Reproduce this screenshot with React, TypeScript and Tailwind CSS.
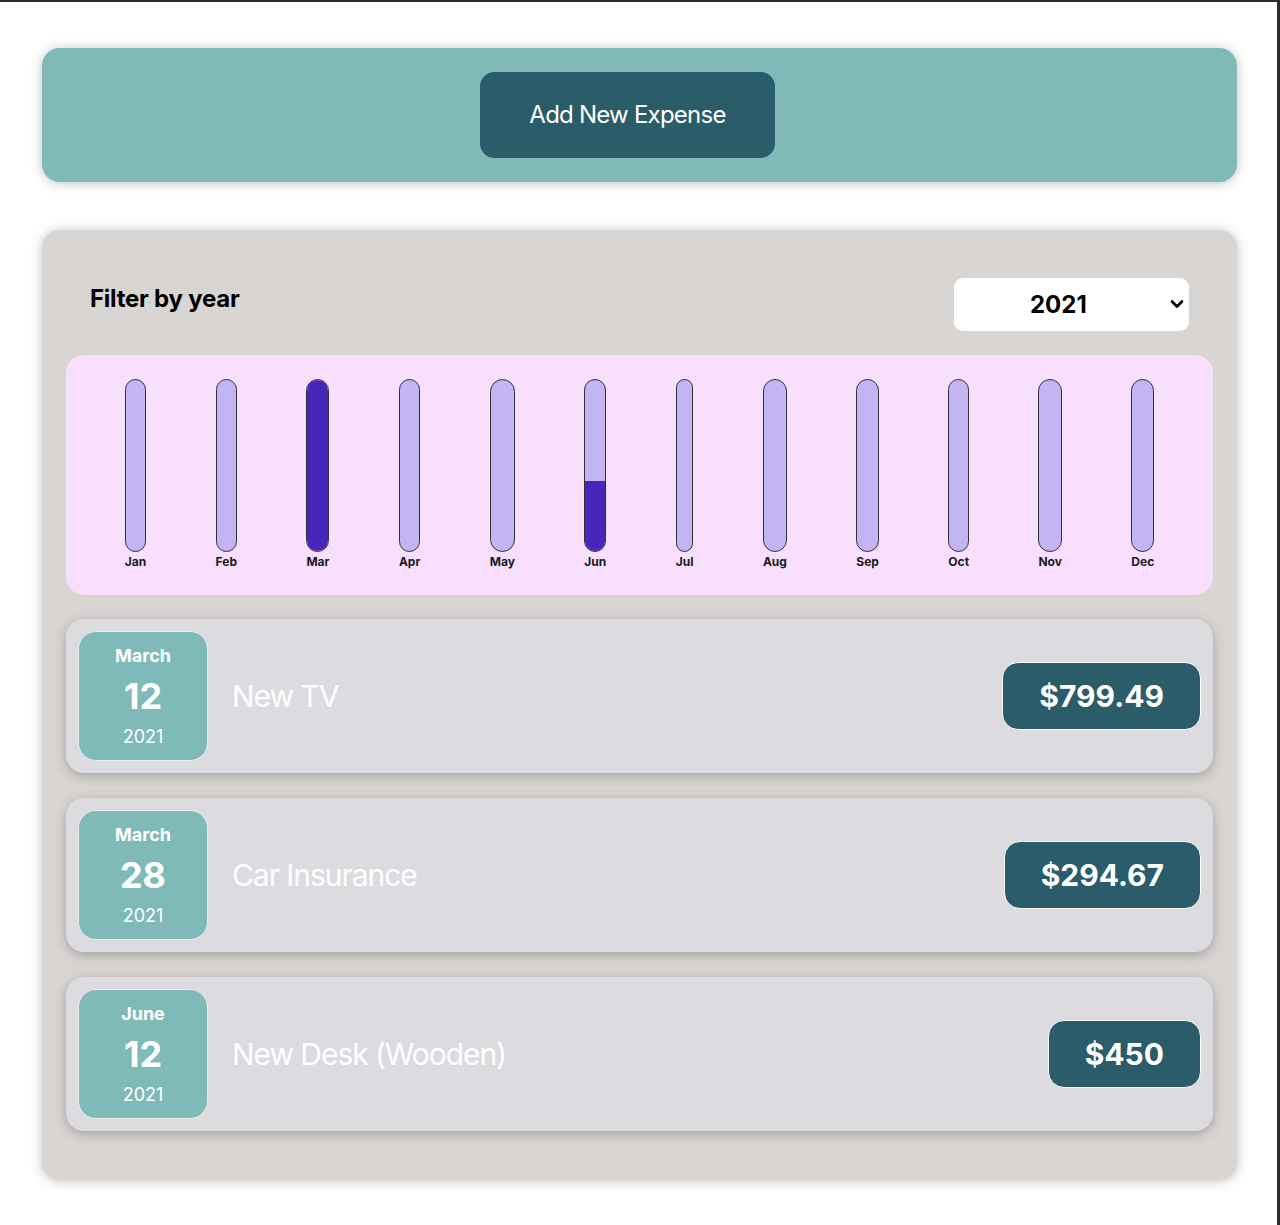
import React from "react";

const months = ["Jan","Feb","Mar","Apr","May","Jun","Jul","Aug","Sep","Oct","Nov","Dec"];
const fills: Record<string, number> = { Mar: 100, Jun: 41.1 };

const expenses = [
  { month: "March", day: "12", year: "2021", title: "New TV", price: "$799.49" },
  { month: "March", day: "28", year: "2021", title: "Car Insurance", price: "$294.67" },
  { month: "June", day: "12", year: "2021", title: "New Desk (Wooden)", price: "$450" },
];

export default function App() {
  return (
    <div className="min-h-[1225px] bg-white border-t-2 border-r-[3px] border-[#2c2c2c] font-['Inter',sans-serif] text-black">
      <div className="w-[1195px] ml-[42px] pt-[46px] pb-[45px]">
        <div className="bg-[#7fbab8] rounded-[18px] p-6 text-center shadow-[0_1px_12px_rgba(0,0,0,0.25)]">
          <button className="bg-[#2a5c69] border border-[#2a5c69] text-white rounded-[14px] px-12 py-6 text-[24px] leading-[36px] tracking-[-0.032em] mr-6">
            Add New Expense
          </button>
        </div>

        <div className="mt-12 bg-[#d9d5d2] rounded-[18px] px-6 pt-6 pb-[49px] shadow-[0_1px_12px_rgba(0,0,0,0.25)]">
          <div className="px-6">
            <div className="flex items-center justify-between my-6">
              <label className="font-bold text-[24px] leading-[36px] mb-3 tracking-[-0.01em]">Filter by year</label>
              <div className="relative">
                <select defaultValue="2021" className="appearance-none bg-white rounded-[9px] w-[235px] h-[53px] pl-[76px] text-[24px] font-bold leading-[29px] outline-none">
                  <option>2022</option>
                  <option>2021</option>
                  <option>2020</option>
                  <option>2019</option>
                </select>
                <svg className="absolute right-[4px] top-[19px] pointer-events-none" width="16" height="14" viewBox="0 0 16 14">
                  <path d="M3 4.5 L8 9.5 L13 4.5" fill="none" stroke="#000" strokeWidth="2.6" strokeLinecap="round" strokeLinejoin="round" />
                </svg>
              </div>
            </div>
          </div>

          <div className="bg-[#f7dffd] rounded-[18px] p-6 h-[240px] flex justify-around text-center">
            {months.map((m) => (
              <div key={m} className="flex flex-col items-center h-full">
                <div className="flex-1 w-full border border-[#313131] rounded-[18px] bg-[#c3b4f3] overflow-hidden flex flex-col justify-end">
                  <div className="bg-[#4826b9] w-full" style={{ height: `${fills[m] ?? 0}%` }} />
                </div>
                <div className="font-bold text-[12px] leading-[19px] text-[#1a1a1a]">{m}</div>
              </div>
            ))}
          </div>

          <div className="flex flex-col gap-[25px] mt-6">
            {expenses.map((e, i) => (
              <div key={i} className="flex items-center p-3 rounded-[18px] bg-[#dcdbe0] shadow-[0_3px_12px_rgba(0,0,0,0.25)]">
                <div className="w-[130px] h-[130px] shrink-0 flex flex-col items-center justify-center border border-[#ececec] rounded-[18px] bg-[#7fbab8] text-white">
                  <div className="text-[18px] font-bold leading-[27px]">{e.month}</div>
                  <div className="text-[36px] font-bold leading-[54px]">{e.day}</div>
                  <div className="text-[18px] leading-[27px]">{e.year}</div>
                </div>
                <h2 className="flex-1 mx-6 text-[30px] leading-[45px] tracking-[-0.035em] text-white font-normal">{e.title}</h2>
                <div className="bg-[#2a5c69] border border-white rounded-[16px] px-9 py-3 text-[30px] leading-[42px] font-bold text-white">
                  {e.price}
                </div>
              </div>
            ))}
          </div>
        </div>
      </div>
    </div>
  );
}
